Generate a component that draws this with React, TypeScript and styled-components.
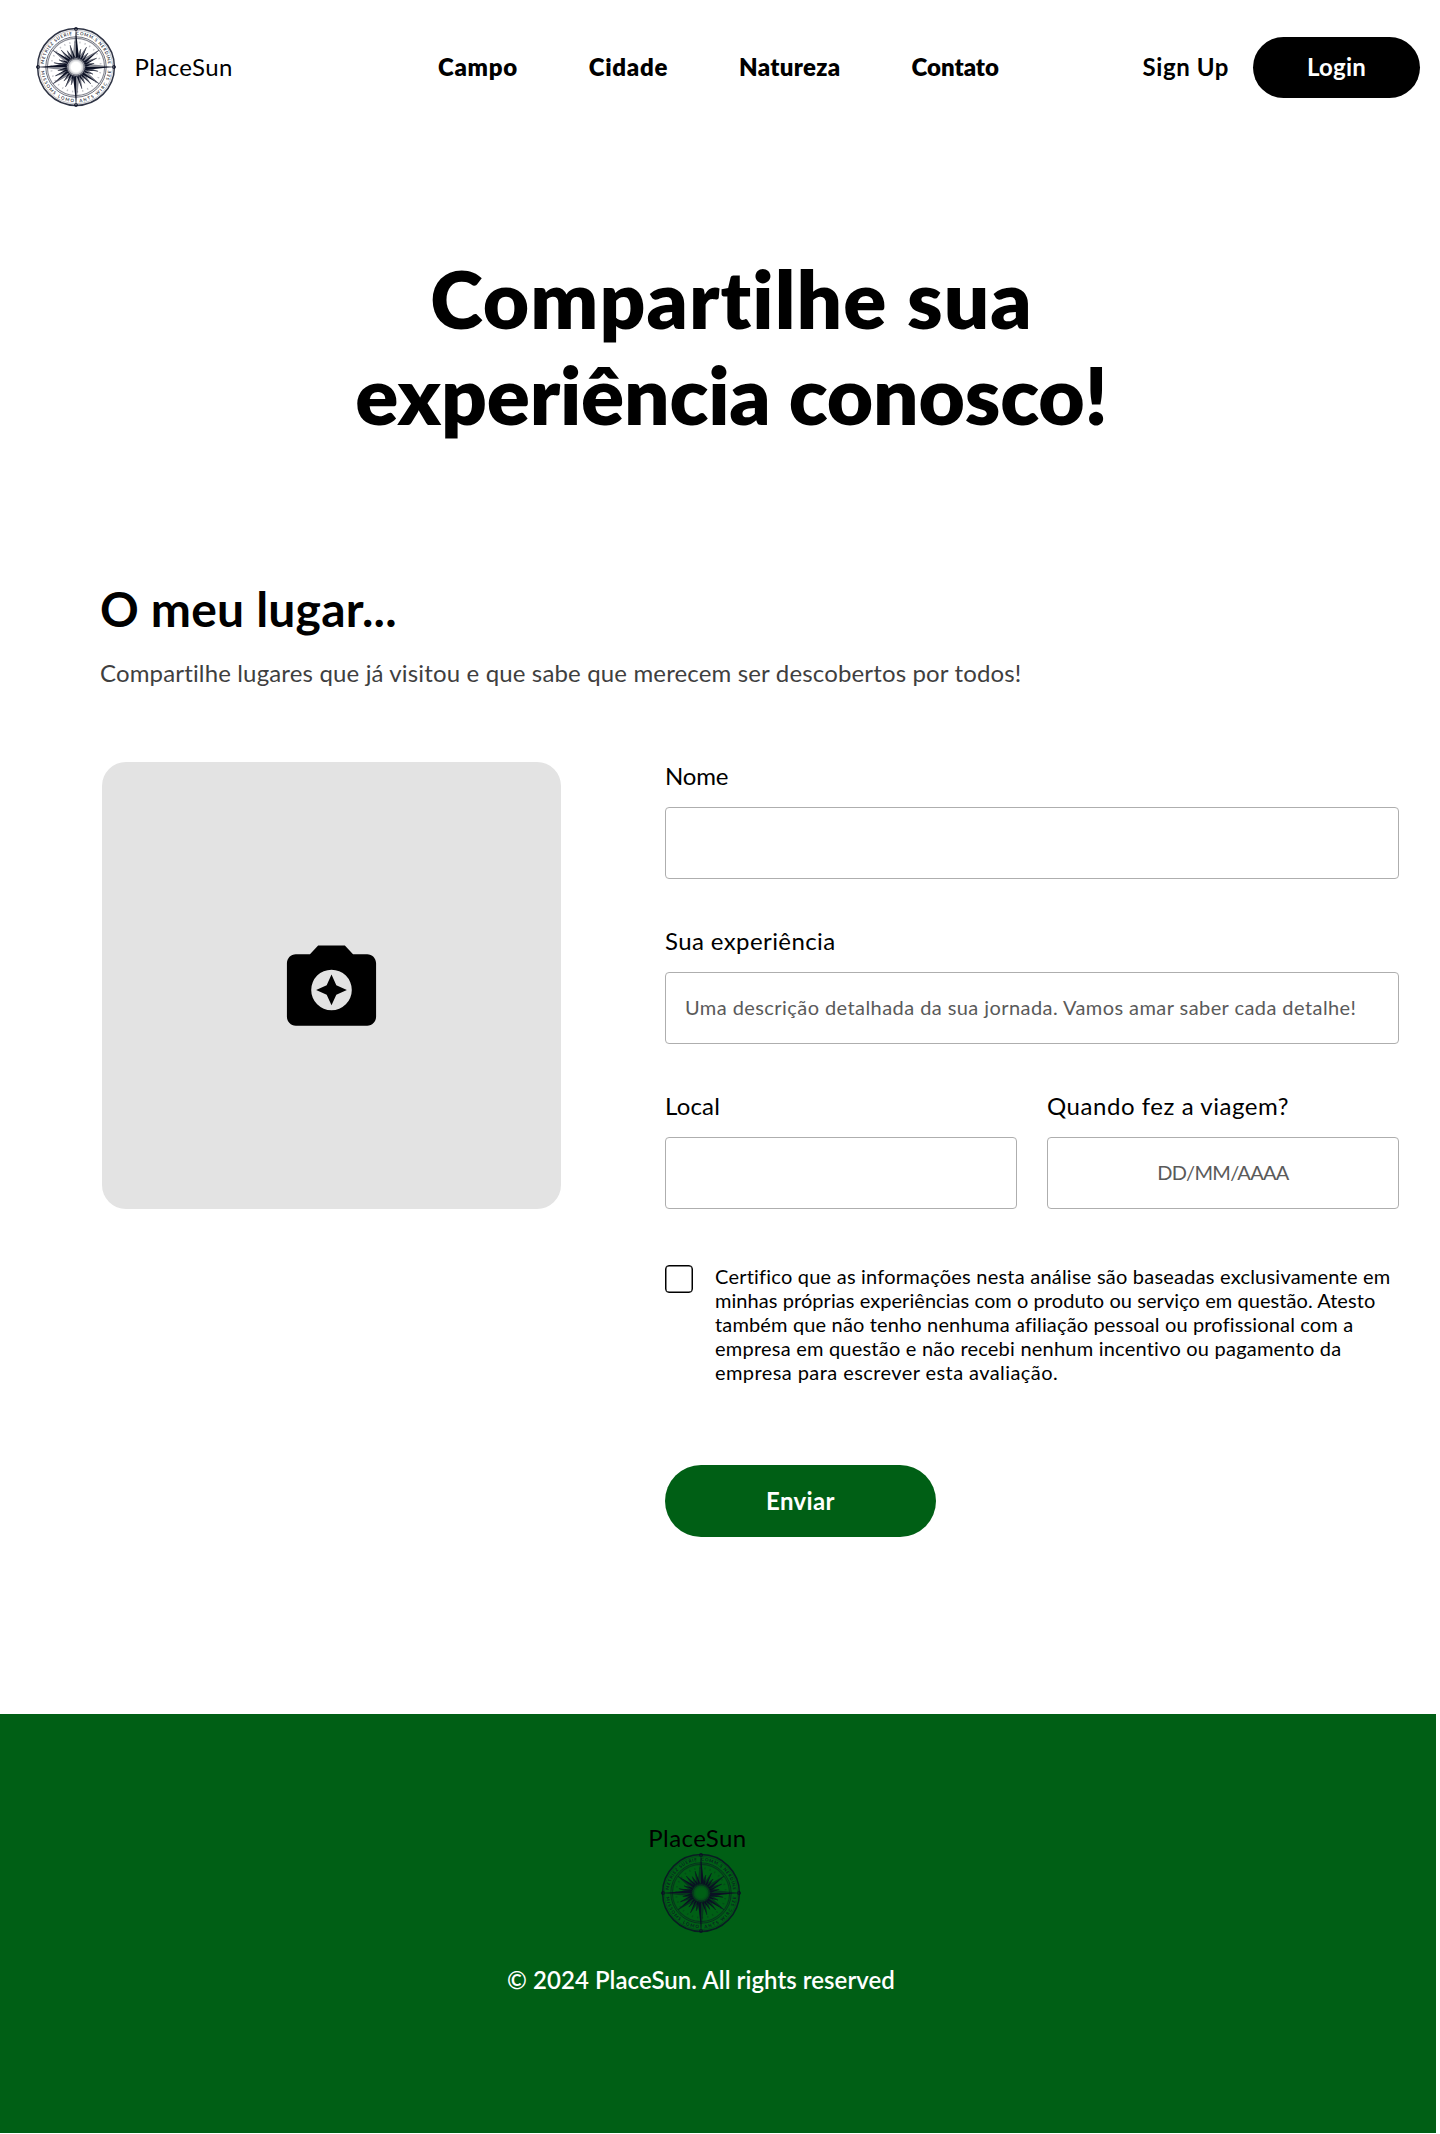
import React from 'react';
import styled, { createGlobalStyle } from 'styled-components';

const GREEN = '#005f15';
const INK = '#0b1024';

const GlobalStyle = createGlobalStyle`
  *, *::before, *::after { box-sizing: border-box; }
  body {
    margin: 0;
    background: #fff;
    color: #000;
    font-family: Lato, "Liberation Sans", sans-serif;
    font-size: 24px;
    line-height: 29px;
    font-variant-ligatures: none;
  }
  h1, h2, p { margin: 0; }
  input, button { font: inherit; }
`;

const Page = styled.div`
  width: 1436px;
  min-height: 2134px;
`;

/* Text run with its own tracking */
const Run = styled.span<{ $track: number }>`
  letter-spacing: ${(p) => p.$track}px;
  white-space: nowrap;
`;

const Header = styled.header`
  display: grid;
  grid-template-columns: 402px 1fr auto;
  align-items: center;
  height: 134px;
  padding: 0 16px 0 36px;
`;

const Brand = styled.a`
  display: flex;
  align-items: center;
  gap: 18.5px;
`;

const BrandName = styled.span`
  padding-bottom: 2px;
`;

const Nav = styled.nav`
  display: flex;
  gap: 71px;
  padding-bottom: 2px;
  font-weight: 800;
`;

const Actions = styled.div`
  display: flex;
  align-items: center;
  gap: 24px;
  font-weight: 700;
`;

const SignUp = styled.a`
  padding-bottom: 2px;
`;

const PillButton = styled.button<{ $width: number; $height: number; $color: string }>`
  display: flex;
  align-items: center;
  justify-content: center;
  width: ${(p) => p.$width}px;
  height: ${(p) => p.$height}px;
  padding: 0 0 2px;
  border: 0;
  border-radius: 36px;
  background: ${(p) => p.$color};
  color: #fff;
  font-weight: 700;
`;

const Title = styled.h1`
  display: flex;
  flex-direction: column;
  align-items: center;
  padding: 116px 0 0 27px;
  font-size: 80px;
  line-height: 96px;
  font-weight: 800;
`;

const Main = styled.main`
  padding: 138px 37px 0 102px;
`;

const SectionTitle = styled.h2`
  font-size: 48px;
  line-height: 58px;
  font-weight: 700;
  margin-left: -2px;
`;

const Lead = styled.p`
  margin: 20px 0 0 -2px;
  color: #3f3f3f;
`;

const Columns = styled.div`
  display: grid;
  grid-template-columns: 459px 734px;
  column-gap: 104px;
  align-items: start;
  margin-top: 74px;
`;

const PhotoDrop = styled.div`
  display: flex;
  align-items: center;
  justify-content: center;
  height: 447px;
  margin-top: 1px;
  border-radius: 24px;
  background: #e3e3e3;
`;

const Form = styled.form`
  display: flex;
  flex-direction: column;
  gap: 47px;
`;

const FieldRow = styled.div`
  display: grid;
  grid-template-columns: 1fr 1fr;
  gap: 30px;
`;

const Field = styled.label`
  display: flex;
  flex-direction: column;
  gap: 17px;
  min-width: 0;
  font-weight: 400;
`;

const Input = styled.input<{ $center?: boolean; $track?: number }>`
  width: 100%;
  height: 72px;
  padding: 0 19px 2px;
  border: 1px solid #aeaeae;
  border-radius: 4px;
  background: #fff;
  font-size: 20px;
  font-weight: 400;
  letter-spacing: ${(p) => p.$track ?? 0}px;
  text-align: ${(p) => (p.$center ? 'center' : 'left')};
  &::placeholder { color: #5a5a5a; opacity: 1; }
`;

const Consent = styled.label`
  display: flex;
  gap: 22px;
  margin-top: 8px;
`;

const Checkbox = styled.input`
  appearance: none;
  flex: none;
  width: 28px;
  height: 28px;
  margin: 1px 0 0;
  border: 1px solid #000;
  border-radius: 4px;
  box-shadow: inset 0 0 0 0.5px #000;
`;

const ConsentText = styled.span`
  display: flex;
  flex-direction: column;
  font-size: 20px;
  line-height: 24px;
  font-weight: 400;
`;

const Submit = styled.div`
  margin-top: 34px;
`;

const Footer = styled.footer`
  display: flex;
  flex-direction: column;
  align-items: center;
  height: 419px;
  margin-top: 177px;
  padding: 109px 34px 0 0;
  background: ${GREEN};
`;

const FooterBrand = styled.div`
  margin-right: 7px;
  margin-bottom: 1px;
`;

const Copyright = styled.p`
  margin-top: 32px;
  color: #fff;
  font-weight: 600;
`;

const CompassSvg = styled.svg`
  display: block;
  overflow: visible;
`;

const Legend = styled.text`
  font-size: 4.4px;
  font-weight: 700;
  fill: ${INK};
  fill-opacity: 0.85;
  white-space: pre;
`;

/* One compass ray: a kite whose right half is solid and left half lighter */
function Ray({ angle, length, half, base = 10 }: { angle: number; length: number; half: number; base?: number }) {
  const tip = 40 - length;
  const foot = 40 - base;
  return (
    <g transform={`rotate(${angle} 40 40)`}>
      <path d={`M40 ${tip}L${40 + half} ${foot}L40 ${foot + 1}Z`} fill={INK} />
      <path
        d={`M40 ${tip}L${40 - half} ${foot}L40 ${foot + 1}Z`}
        fill={INK}
        fillOpacity=".4"
        stroke={INK}
        strokeWidth=".35"
      />
    </g>
  );
}

const CARDINALS = [0, 90, 180, 270];
const DIAGONALS = [54, 126, 234, 306];
const FLAMES = [15, 28, 41, 67, 79, 101, 113, 139, 152, 165, 195, 208, 221, 247, 259, 281, 293, 319, 332, 345];

function Compass({ id }: { id: string }) {
  return (
    <CompassSvg width="80" height="80" viewBox="0 0 80 80" aria-hidden="true">
      <defs>
        <path id={`${id}-top`} d="M7.8 40A32.2 32.2 0 0 1 72.2 40" />
        <path id={`${id}-bottom`} d="M4.7 40A35.3 35.3 0 0 0 75.3 40" />
        <radialGradient id={`${id}-sun`}>
          <stop offset=".6" stopColor={INK} stopOpacity="0" />
          <stop offset="1" stopColor={INK} stopOpacity=".3" />
        </radialGradient>
      </defs>
      <g fill="none" stroke={INK}>
        <circle cx="40" cy="40" r="38.4" strokeWidth="1.5" strokeOpacity=".85" />
        <circle cx="40" cy="40" r="36.7" strokeWidth=".5" strokeOpacity=".5" />
        <circle cx="40" cy="40" r="30.2" strokeWidth=".8" strokeOpacity=".75" />
        <circle cx="40" cy="40" r="28.6" strokeWidth="1.1" strokeOpacity=".5" />
        <circle cx="40" cy="40" r="24.8" strokeWidth="1.8" strokeOpacity=".25" strokeDasharray="1.2 4" />
      </g>
      <Legend>
        <textPath href={`#${id}-top`} startOffset="3" textLength="95">METRIEZ SUERIE  COMM.S NERDINE</textPath>
      </Legend>
      <Legend>
        <textPath href={`#${id}-bottom`} startOffset="4" textLength="103">MISSOMS LOMO  ANTS WIRC SEE</textPath>
      </Legend>
      {FLAMES.map((a, i) => (
        <Ray key={a} angle={a} length={i % 2 ? 22.5 : 18.5} half={1.7} />
      ))}
      {DIAGONALS.map((a) => (
        <Ray key={a} angle={a} length={28.3} half={2.2} />
      ))}
      {CARDINALS.map((a) => (
        <g key={a}>
          <Ray angle={a} length={36} half={2.9} />
          <circle
            cx="40"
            cy="2"
            r="1.6"
            fill={INK}
            fillOpacity=".5"
            stroke={INK}
            strokeWidth=".7"
            transform={`rotate(${a} 40 40)`}
          />
        </g>
      ))}
      <circle cx="40" cy="40" r="9.2" fill="none" stroke={INK} strokeWidth="1.3" strokeOpacity=".7" />
      <circle cx="40" cy="40" r="8" fill={`url(#${id}-sun)`} stroke={INK} strokeWidth=".4" />
    </CompassSvg>
  );
}

function CameraIcon() {
  return (
    <svg width="107" height="107" viewBox="0 0 24 24" aria-hidden="true">
      <path
        fillRule="evenodd"
        d="M9 3 7.17 5H4c-1.1 0-2 .9-2 2v12c0 1.1.9 2 2 2h16c1.1 0 2-.9 2-2V7c0-1.1-.9-2-2-2h-3.17L15 3Zm3 5.45a4.55 4.55 0 1 1 0 9.1 4.55 4.55 0 0 1 0-9.1Z"
      />
      <path d="m12 16.45 1.08-2.37L15.45 13l-2.37-1.08L12 9.55l-1.08 2.37L8.55 13l2.37 1.08Z" />
    </svg>
  );
}

const NAV: [string, number][] = [
  ['Campo', 0.7],
  ['Cidade', 0.7],
  ['Natureza', 0.3],
  ['Contato', 0],
];

const CONSENT: [string, number][] = [
  ['Certifico que as informações nesta análise são baseadas exclusivamente em', 0.22],
  ['minhas próprias experiências com o produto ou serviço em questão. Atesto', 0.06],
  ['também que não tenho nenhuma afiliação pessoal ou profissional com a', 0.15],
  ['empresa em questão e não recebi nenhum incentivo ou pagamento da', 0.22],
  ['empresa para escrever esta avaliação.', 0.42],
];

export default function App() {
  return (
    <>
      <GlobalStyle />
      <Page>
        <Header>
          <Brand>
            <Compass id="header" />
            <BrandName><Run $track={0.4}>PlaceSun</Run></BrandName>
          </Brand>
          <Nav>
            {NAV.map(([label, track]) => (
              <Run key={label} $track={track}>{label}</Run>
            ))}
          </Nav>
          <Actions>
            <SignUp><Run $track={0.6}>Sign Up</Run></SignUp>
            <PillButton type="button" $width={167} $height={61} $color="#000">
              <Run $track={0.2}>Login</Run>
            </PillButton>
          </Actions>
        </Header>

        <Title>
          <Run $track={1.05}>Compartilhe sua</Run>
          <Run $track={-0.2}>experiência conosco!</Run>
        </Title>

        <Main>
          <SectionTitle><Run $track={0.2}>O meu lugar...</Run></SectionTitle>
          <Lead>
            <Run $track={0.15}>
              Compartilhe lugares que já visitou e que sabe que merecem ser descobertos por todos!
            </Run>
          </Lead>

          <Columns>
            <PhotoDrop><CameraIcon /></PhotoDrop>
            <Form>
              <Field>
                <Run $track={-0.2}>Nome</Run>
                <Input />
              </Field>
              <Field>
                <Run $track={0.4}>Sua experiência</Run>
                <Input
                  $track={0.43}
                  placeholder="Uma descrição detalhada da sua jornada. Vamos amar saber cada detalhe!"
                />
              </Field>
              <FieldRow>
                <Field>
                  <Run $track={0.2}>Local</Run>
                  <Input />
                </Field>
                <Field>
                  <Run $track={0.55}>Quando fez a viagem?</Run>
                  <Input $center $track={-0.7} placeholder="DD/MM/AAAA" />
                </Field>
              </FieldRow>
              <Consent>
                <Checkbox type="checkbox" />
                <ConsentText>
                  {CONSENT.map(([line, track]) => (
                    <Run key={line} $track={track}>{line}</Run>
                  ))}
                </ConsentText>
              </Consent>
              <Submit>
                <PillButton type="button" $width={271} $height={72} $color={GREEN}>
                  <Run $track={0.35}>Enviar</Run>
                </PillButton>
              </Submit>
            </Form>
          </Columns>
        </Main>

        <Footer>
          <FooterBrand><Run $track={0.4}>PlaceSun</Run></FooterBrand>
          <Compass id="footer" />
          <Copyright><Run $track={0.05}>© 2024 PlaceSun. All rights reserved</Run></Copyright>
        </Footer>
      </Page>
    </>
  );
}
